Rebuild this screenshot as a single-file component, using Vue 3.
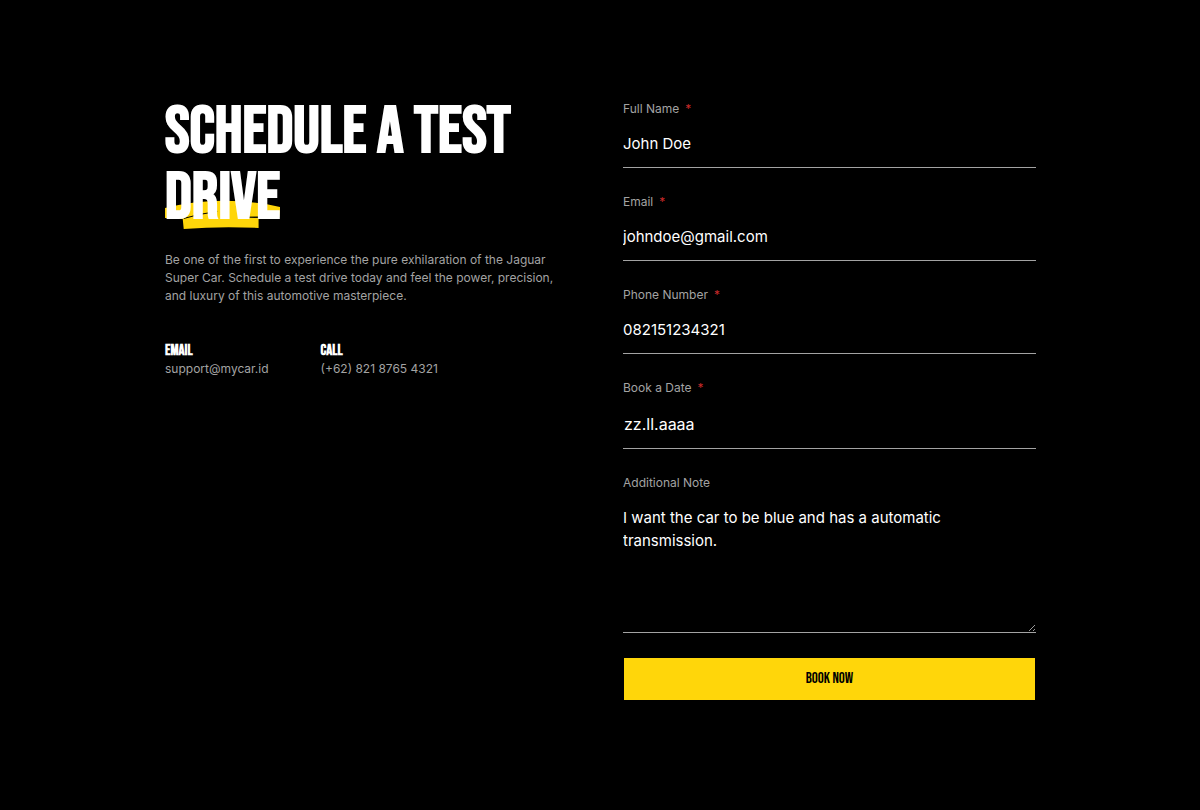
<script setup>
import { reactive } from 'vue'

const form = reactive({
  name: 'John Doe',
  email: 'johndoe@gmail.com',
  phone: '082151234321',
  date: 'zz.ll.aaaa',
  note: 'I want the car to be blue and has a automatic transmission.',
})

const fields = [
  { key: 'name', label: 'Full Name', type: 'text' },
  { key: 'email', label: 'Email', type: 'email' },
  { key: 'phone', label: 'Phone Number', type: 'tel' },
  { key: 'date', label: 'Book a Date', type: 'text' },
]
</script>

<template>
  <main class="page">
    <section class="intro">
      <h1 class="title">
        SCHEDULE A TEST
        <span class="marked">
          <svg class="stroke" viewBox="0 0 117 29" preserveAspectRatio="none" aria-hidden="true">
            <path d="M0 8Q57-6 117 7L116 17Q101 16 82 18L95 18V28Q57 26 19 29L18 19Q8 18 0 18Z" />
            <path class="gap" d="M19 18.500Q33 14 53 11.500M78 17.500Q93 16.500 116 17.500" />
          </svg>
          <span class="word">DRIVE</span>
        </span>
      </h1>
      <p class="lead">
        Be one of the first to experience the pure exhilaration of the Jaguar Super Car. Schedule a
        test drive today and feel the power, precision, and luxury of this automotive masterpiece.
      </p>
      <div class="contacts">
        <div>
          <h2 class="contact-title">EMAIL</h2>
          <p class="contact-text">support@mycar.id</p>
        </div>
        <div>
          <h2 class="contact-title">CALL</h2>
          <p class="contact-text">(+62) 821 8765 4321</p>
        </div>
      </div>
    </section>

    <form class="form" @submit.prevent>
      <div v-for="f in fields" :key="f.key" class="field">
        <label class="label" :for="f.key">{{ f.label }}<span class="required">*</span></label>
        <input :id="f.key" v-model="form[f.key]" class="control" :class="{ date: f.key === 'date' }" :type="f.type" required />
      </div>
      <div class="field">
        <label class="label" for="note">Additional Note</label>
        <textarea id="note" v-model="form.note" class="control note"></textarea>
      </div>
      <button class="submit" type="submit">BOOK NOW</button>
    </form>
  </main>
</template>

<style>
body {
  margin: 0;
  background: #000;
}
</style>

<style scoped>
.page {
  box-sizing: border-box;
  max-width: 920px;
  margin: 0 auto;
  padding: 100px 24px 99px 25px;
  display: grid;
  grid-template-columns: repeat(2, minmax(0, 1fr));
  gap: 45px;
  font-family: Inter, "Liberation Sans", sans-serif;
  color: #fff;
}
.title,
.contact-title,
.submit {
  font-family: "Bebas Neue", "Liberation Sans Narrow", "Liberation Sans", sans-serif;
  font-weight: 700;
}
.title {
  margin: 0;
  font-size: 66px;
  line-height: 66px;
}
.marked {
  position: relative;
  display: table;
}
.word {
  position: relative;
}
.stroke {
  position: absolute;
  left: 0;
  bottom: 3px;
  width: 100%;
  height: 29px;
  fill: #ffd60a;
}
.gap {
  fill: none;
  stroke: #000;
  stroke-width: 1;
}
.lead {
  max-width: 400px;
  margin: 19px 0 0;
  font-size: 12px;
  line-height: 18px;
  color: #a3a3a3;
}
.contacts {
  display: flex;
  gap: 52px;
  margin-top: 37px;
}
.contact-title {
  margin: 0;
  font-size: 15px;
  line-height: 18px;
}
.contact-text {
  margin: 0;
  font-size: 12px;
  line-height: 18px;
  color: #a3a3a3;
}
.form {
  display: flex;
  flex-direction: column;
  gap: 25px;
}
.field {
  display: flex;
  flex-direction: column;
  gap: 2px;
}
.label {
  font-size: 12px;
  line-height: 18px;
  color: #a3a3a3;
}
.required {
  margin-left: 6px;
  color: #c92a2a;
}
.control {
  box-sizing: border-box;
  width: 100%;
  height: 48px;
  margin: 0;
  padding: 12px 0;
  border: 0;
  border-bottom: 1px solid #a3a3a3;
  border-radius: 0;
  outline: 0;
  background: transparent;
  color: #fff;
  font-family: inherit;
  font-size: 15px;
  line-height: 23px;
}
.date {
  height: 50px;
  padding-left: 1px;
  font-size: 16px;
}
.note {
  height: 139px;
  padding-right: 8px;
  resize: vertical;
}
.submit {
  height: 42px;
  margin: 0 1px;
  padding: 0 0 2px;
  border: 0;
  background: #ffd60a;
  color: #000;
  font-size: 15px;
  font-weight: 400;
  cursor: pointer;
}
</style>
